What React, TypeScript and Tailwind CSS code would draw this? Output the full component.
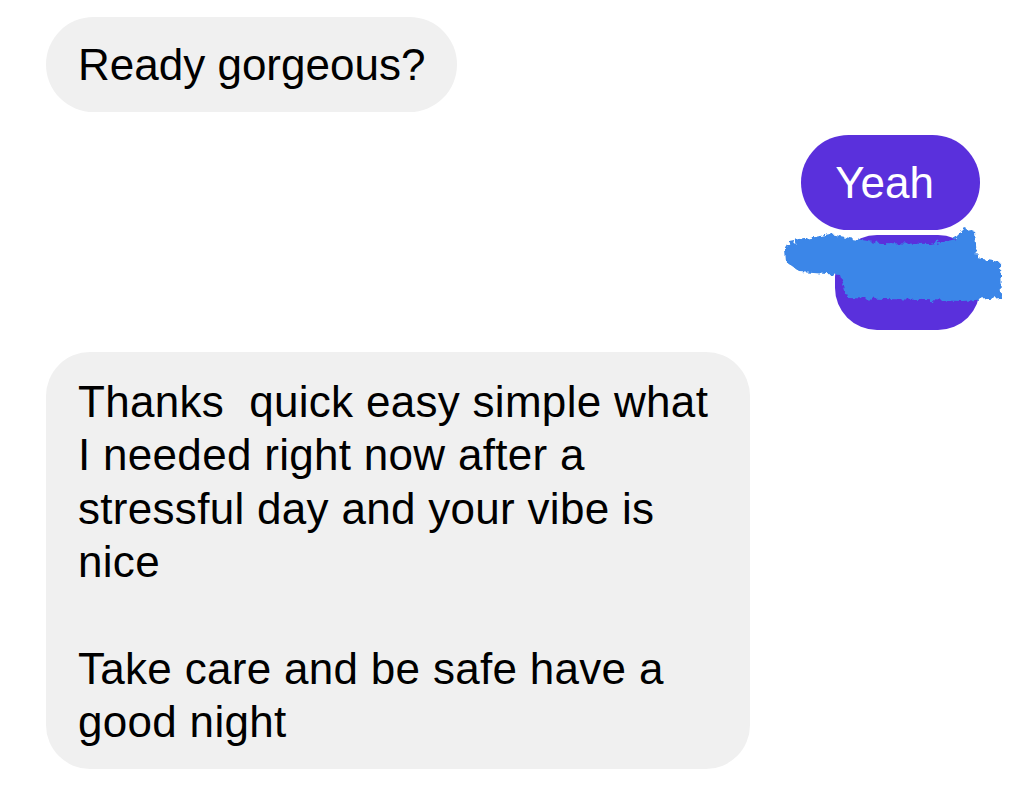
const font = { fontFamily: '"Liberation Sans", Arial, sans-serif' };

function Scribble() {
  return (
    <svg
      className="absolute left-[-55px] top-[-15px] pointer-events-none"
      width="230"
      height="90"
      viewBox="0 0 230 90"
    >
      <defs>
        <filter id="rough" x="-10%" y="-10%" width="120%" height="120%">
          <feTurbulence type="fractalNoise" baseFrequency="0.22" numOctaves="2" seed="3" />
          <feDisplacementMap in="SourceGraphic" scale="7" result="d" />
          <feGaussianBlur in="d" stdDeviation="0.6" />
        </filter>
      </defs>
      <path
        filter="url(#rough)"
        fill="#3a86e8"
        d="M10 22 L50 14 L70 18 L100 23 L150 24 L175 18 L185 8 L195 12 L197 38 L220 42 L221 78 L183 81 L67 78 L60 55 L20 52 L6 42 L5 30 Z"
      />
    </svg>
  );
}

export default function App() {
  return (
    <div className="w-[1024px] h-[792px] bg-white overflow-hidden" style={font}>
      <div className="flex flex-col pl-[46px] pr-[44px] pt-[17px] text-[44px] leading-[53px] text-black">
        <div className="self-start rounded-full bg-[#f0f0f0] px-8 py-[21px]">Ready gorgeous?</div>

        <div className="self-end mt-[23px] rounded-full bg-[#5a30dc] text-white pl-[34px] pr-[46px] py-[21px]">Yeah</div>

        <div className="self-end mt-[5px] relative">
          <div className="w-[145px] h-[95px] rounded-[42px] bg-[#5a30dc]" />
          <Scribble />
        </div>

        <div className="self-start mt-[22px] w-[704px] rounded-[44px] bg-[#f0f0f0] pl-8 pr-6 pt-[23px] pb-[21px] leading-[53.33px] tracking-[0.3px]">
          Thanks&nbsp; quick easy simple what
          <br />I needed right now after a
          <br />stressful day and your vibe is
          <br />nice
          <br />
          <br />Take care and be safe have a
          <br />good night
        </div>
      </div>
    </div>
  );
}
